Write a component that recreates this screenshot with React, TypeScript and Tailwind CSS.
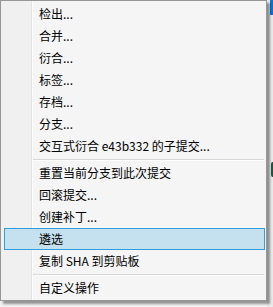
import React from 'react';

type Entry = { label: string; active?: boolean } | 'sep';

const items: Entry[] = [
  { label: '检出...' },
  { label: '合并...' },
  { label: '衍合...' },
  { label: '标签...' },
  { label: '存档...' },
  { label: '分支...' },
  { label: '交互式衍合 e43b332 的子提交...' },
  'sep',
  { label: '重置当前分支到此次提交' },
  { label: '回滚提交...' },
  { label: '创建补丁...' },
  { label: '遴选', active: true },
  { label: '复制 SHA 到剪贴板' },
  'sep',
  { label: '自定义操作' },
];

export default function App() {
  return (
    <div className="w-[273px] h-[307px] overflow-hidden flex items-start bg-[#f0f0f0]">
      {/* Context menu */}
      <div
        className="relative z-10 w-[267px] h-[301px] flex-shrink-0 border border-[#979797] pt-[2px] shadow-[3px_3px_2px_rgba(0,0,0,0.38)] bg-[linear-gradient(to_right,#f0f0f0_0,#f0f0f0_30px,#e2e3e3_30px,#e2e3e3_31px,#ffffff_31px,#ffffff_32px,#f5f5f5_32px)] text-[12px] text-black"
        style={{ fontFamily: '"Noto Sans CJK SC", "Noto Sans", sans-serif' }}
      >
        {items.map((it, i) =>
          it === 'sep' ? (
            <div key={i} className="h-[5px] pt-[2px] pl-[32px] pr-[2px]">
              <div className="h-px bg-[#d7d7d7]" />
              <div className="h-px bg-white" />
            </div>
          ) : (
            <div
              key={i}
              className={`ml-[3px] mr-[1px] h-[22px] flex items-center pl-[34px] border whitespace-nowrap leading-none ${
                it.active ? 'bg-[#c5e1ef] border-[#2f9ed9]' : 'border-transparent'
              }`}
            >
              {it.label}
            </div>
          )
        )}
      </div>

      {/* Window behind the menu */}
      <div className="flex-1 h-full flex flex-col bg-[#e9e9e9]">
        <div className="h-[15px] ml-[3px] bg-[#0b72cf]" />
        <div className="h-[147px]" />
        <div className="h-[15px] ml-[4px] rounded-l-[4px] bg-[#2f9e72] border border-[#22553f]" />
      </div>
    </div>
  );
}
